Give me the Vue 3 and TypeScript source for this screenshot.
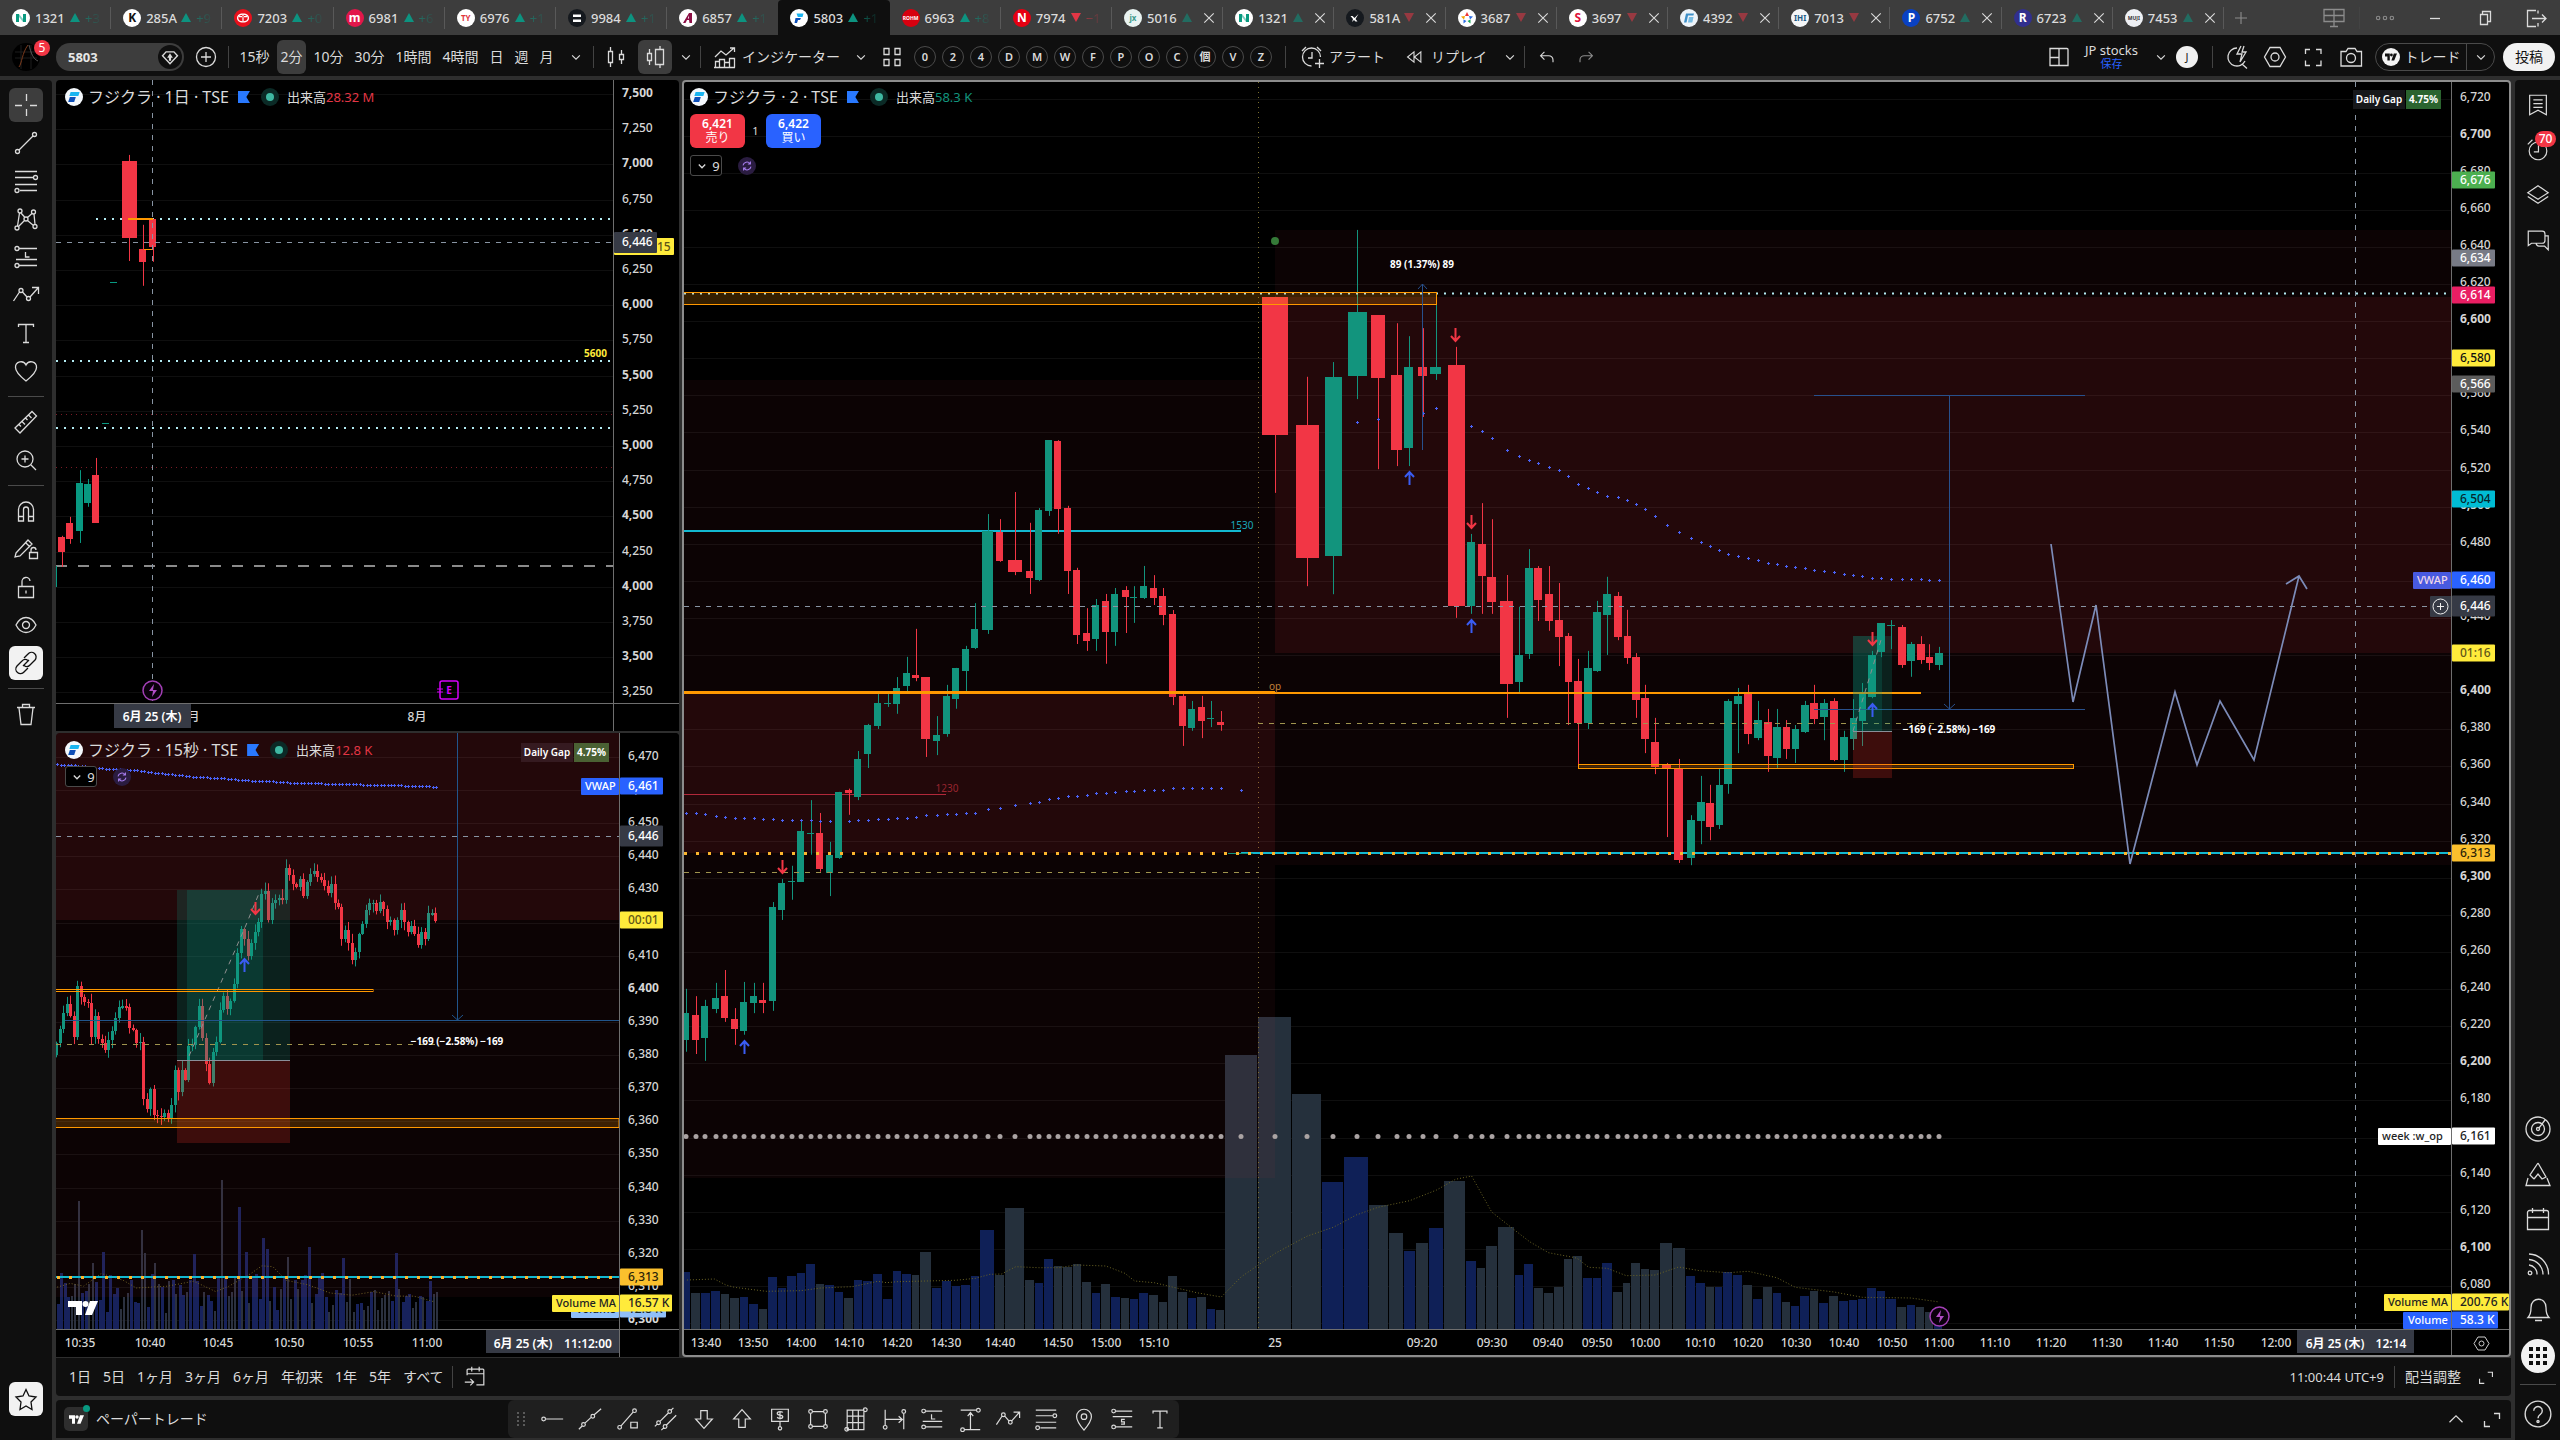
<script setup lang="ts">
import { h } from 'vue'

type Row = number[]
interface Candle { x: number; hi: number; top: number; bot: number; lo: number; w: number; up: boolean }
interface Tag { y: number; text: string; bg: string; fg: string; h?: number; w?: number }

const ring = (x: number, y: number, r: number) =>
  `M${x - r} ${y}a${r} ${r} 0 1 0 ${2 * r} 0a${r} ${r} 0 1 0 ${-2 * r} 0`

/* 28 x 28 stroke icons */
const icons: Record<string, string> = {
  cross: 'M14.5 3v7M14.5 18v7M3 14.5h7M18 14.5h7',
  trend: ring(5.5, 22.5, 2) + ring(22.5, 5.5, 2) + 'M7 21L21 7',
  fib: 'M3 4.5h22M3 10.5h18M3 17.5h22M8 23.5h17' + ring(23.5, 10.5, 2) + ring(5, 23.5, 2),
  pattern: ring(8, 6, 2) + ring(14, 14, 2) + ring(21.5, 7, 2) + ring(5, 23, 2) + ring(23, 21.5, 2) + 'M7.5 8L5.5 21M9 8l4 4.500M15.500 12.500L20 8.500M22 9l1 10.500M6.500 21.500L12.500 15.500M15.500 15.500L21.500 20.500',
  longpos: ring(5, 5.5, 2) + 'M7 5.500h18M4 16.500h21' + ring(5, 22.5, 2) + 'M7 22.500h18M13.500 9v5h4',
  shortpos: ring(5, 5.5, 2) + 'M7 5.500h18M4 11.500h21' + ring(5, 22.5, 2) + 'M7 22.500h18M17 14.500h-3.500v2.500h3v2.500h-3.500',
  forecast: ring(9, 9.5, 2) + ring(16.5, 17.5, 2) + 'M1.500 20L7.500 11M10.500 11l4.500 5M18 16l8-9M20 6.500h6.500v6.500',
  text: 'M6.500 8V5.500h15V8M14 5.500v18M11 23.500h6',
  heart: 'M14 24C9 20 3.500 15.500 3.500 10.500A5.500 5.500 0 0 1 14 8a5.500 5.500 0 0 1 10.500 2.500C24.500 15.500 19 20 14 24z',
  ruler: 'M3 20L20 3.500l4.500 4.500L8 25zM7 16.500l2 2M10 13.500l3 3M13.500 10l2 2M16.500 7l3 3',
  zoomin: ring(13, 13, 8) + 'M19 19l5 5M13 9.500v7M9.500 13h7',
  magnet: 'M6.500 24V12.500a7.500 7.500 0 0 1 15 0V24h-5V12.500a2.500 2.500 0 0 0-5 0V24zM6.500 19.500h5M16.500 19.500h5',
  penlock: 'M4 18L16 5l4 4L8 21l-5 1zM14 8l4 4M17.500 17.500h8v6h-8zM19 17v-2a2.500 2.500 0 0 1 5 0',
  lock: 'M6.500 13.500h15v11h-15zM10 13V9a4 4 0 0 1 8-1M14 17.500v3',
  eye: 'M4 14c5-10 15-10 20 0c-5 10-15 10-20 0z' + ring(14, 14, 3.5),
  link: 'M12 9l4-4a4.500 4.500 0 0 1 7 6l-5 5a4.500 4.500 0 0 1-6 .500M16 19l-4 4a4.500 4.500 0 0 1-7-6l5-5a4.500 4.500 0 0 1 6-.500M11 17l6-6',
  trash: 'M5 7.500h18M10.500 7V4.500h7V7M7 8l2 16.500h10L21 8',
  star: 'M14 4.500l3 6.500 7 1-5 5 1 7.500-6-3.500-6 3.500 1-7.500-5-5 7-1z',
  list: 'M5 3.500h18v21l-9-5-9 5zM9 8.500h10M9 12.500h10M9 16.500h10',
  alarm: ring(14, 15, 9.5) + 'M14.500 9v7h-5M3 8l5-5M20 3l5 5',
  layers: 'M14 4L25 11.500 14 18.500 3 11.500zM3 15.500l11 7.500 11-7.500',
  chat: 'M3.500 20V4.500h15a3 3 0 0 1 3 3v7a3 3 0 0 1-3 3H7zM22 9.500h3v15l-4-4h-6a3 3 0 0 1-3-2.500',
  target: ring(14, 14, 12) + ring(14, 14, 6.5) + ring(14, 14, 1.5) + 'M15 13l6-8',
  tree: 'M14 3l8 14-4 2-4-5-4 5M14 3L6 15l4 4M4 18l-2 7.500h24L23 18',
  calendar: 'M3.500 7.500a2 2 0 0 1 2-2h17a2 2 0 0 1 2 2v17h-21zM3.500 12.500h21M8.500 3v5M19.500 3v5',
  rss: ring(6, 23, 1.8) + 'M5 15a9 9 0 0 1 8 9.500M5 9.500a15 15 0 0 1 14 15M5 4a20 20 0 0 1 19.500 20.500',
  bell: 'M4 22.500h21c-2-2-3-4-3-10 0-11-15-11-15 0 0 6-1 8-3 10zM11 25.500h7',
  help: ring(14, 14, 12) + 'M10 11a4 4 0 1 1 6 3.500c-1.500 1-2 1.500-2 3.500' + ring(14, 21, 1),
  plusring: ring(14, 14, 9.5) + 'M14 9v10M9 14h10',
  bars: 'M8.500 4v4M8.500 20v4M6.500 8.500h4v11h-4zM19.500 7v4M19.500 17v4M17.500 11.500h4v5h-4z',
  hollow: 'M8.500 6v4M8.500 18v4M6.500 10.500h4v7h-4zM19 3v3M19 22v3M14.500 6.500h8v15h-8z',
  indicator: 'M4.500 24.500v-6h4v6M8.500 24.500v-8h5v8M13.500 24.500v-5h5v5M18.500 24.500v-9h5v9M3 24.500h21M4 14l6-6 5 4 8-7M19 5h4.500v4',
  grid4: 'M6 5.500h5v6H6zM17 5.500h5v6h-5zM6 16.500h5v6H6zM17 16.500h5v6h-5z',
  alarmplus: 'M22.500 14a9 9 0 1 0-9 9M14 9v6H10M4 8l4-4M19 4l4 4M21.500 16v9M17 20.500h9',
  rewind: 'M14 8v12l-7.500-6zM22 8v12l-7.500-6z',
  undo: 'M11 8l-4.500 4.500L11 17M7 12.500h9a5 5 0 0 1 5 5V20',
  redo: 'M17 8l4.500 4.500L17 17M21 12.500h-9a5 5 0 0 0-5 5V20',
  layout: 'M5 5.500h17a1 1 0 0 1 1 1v16h-18zM14 5.500v17M5 14.500h9',
  quick: 'M14 5a9 9 0 1 0 8 13M19 21l5 4.500M18 3l-4 8h5l-2 8 6-10h-4l2-6',
  hex: 'M9 4.500h10l5.500 9.500L19 23.500H9L3.500 14z' + ring(14, 14, 4),
  full: 'M6.500 11V6.500H11M17 6.500h5V11M22 17.500v5h-5M11 22.500H6.500V17.500',
  camera: 'M4 8.500h5l2-3h7l2 3h4.500v14.500H4z' + ring(14, 15, 4.5),
  goto: 'M5.500 12V6.500a1 1 0 0 1 1-1h16a1 1 0 0 1 1 1v16h-8M5.500 10.500h18M10.500 3v5M18.500 3v5M3 19.500h9M9 16l3.500 3.500L9 23',
  expand: 'M16 8.500h5.500V14M6.500 16v5.500H12',
  hray: ring(5, 14, 2) + 'M7 14h19',
  eline: ring(7, 20, 2) + ring(17, 11, 2) + 'M8.500 18.500l7-6.500M18.500 9.500L26 3M2 25l3.500-3.500',
  path: ring(5, 23, 2) + ring(21, 5, 2) + 'M6.500 21.500L19.500 6.500M17 17.500h7v6h-7z',
  parallel: ring(6, 18, 2) + ring(18, 6, 2) + ring(13, 22, 2) + 'M7.500 16.500l9-9M14.500 20.500L25 10M2 22l2.500-2.500M9 26l2.500-2.500M19.500 4.500L22 2',
  down: 'M10.500 5h7v9H23l-9 10-9-10h5.500z',
  up: 'M10.500 23h7v-9H23L14 4 5 14h5.500z',
  note: 'M5 3.500h18v13H5zM14 17v5' + ring(14, 24, 1.8) + 'M17 7c-1-1.500-6-1.500-6 1s6 1 6 3.500-5 2.500-6 .500M14 5.500v9',
  rect: ring(6, 6, 2) + ring(22, 6, 2) + ring(6, 22, 2) + ring(22, 22, 2) + 'M8 6h12M8 22h12M6 8v12M22 8v12',
  table: 'M4.500 4.500h18v21h-18zM4.500 11h18M4.500 18h18M10.500 4.500v21M16.500 4.500v21' + ring(24, 4, 2) + ring(4, 25, 2),
  daterange: 'M4.500 4v17M24.500 8v17M5 14.500h18M19 11l4 3.500-4 3.500' + ring(4.5, 23, 2) + ring(24.5, 6, 2),
  pricerange: 'M4 4.500h17M8 25.500h17M14.500 25V8M11.500 11l3-4 3 4' + ring(23, 4.5, 2) + ring(6, 25.5, 2),
  pin: 'M14 26C9 20 6 16 6 11.500a8 8 0 0 1 16 0C22 16 19 20 14 26z' + ring(14, 11.5, 3),
  monitor: 'M4 5.500h20v12H4zM14 5.500V22M10 22.500h8M4 11.500h20',
  dots: ring(6, 14, 2) + ring(14, 14, 2) + ring(22, 14, 2),
  mini: 'M9 14.500h10',
  restore: 'M9.500 10.500h7v10h-7zM11.500 10V7.500h8v10H17',
  exit: 'M15 6.500H6.500v16H15M17 9.500V6.500M17 19v3.500M11 14.500h14M21 10.500l4 4-4 4',
  plus: 'M14 7v14M7 14h14',
  close: 'M8.500 8.500l11 11M19.500 8.500l-11 11',
  chev: 'M9.500 12l4.500 4.500 4.500-4.500',
  chevup: 'M7 17.500l7-7 7 7',
  sync: 'M7 13a7 7 0 0 1 12.500-3M21 15a7 7 0 0 1-12.500 3M20 6v4.500h-4.500M8 22v-4.500h4.500',
  gem: 'M9 7.500h10l4.500 5L14 22.500 4.500 12.500zM14 11l2 3h-1.500v4h-1v-4H12z'
}

const Icon = (p: { name: string; size?: number }) =>
  h('svg', {
    viewBox: '0 0 28 28', width: p.size ?? 28, height: p.size ?? 28, fill: 'none',
    stroke: 'currentColor', 'stroke-width': (p.size ?? 28) < 24 ? 1.8 : 1.3, 'aria-hidden': 'true', style: 'display:block;flex:none'
  }, [h('path', { d: icons[p.name] })])
Icon.props = ['name', 'size']

/* ---------- tabs ---------- */
const tabs = [
  ['1321', 'N', '#fff', '#0a9a80', 'u', '+3'], ['285A', 'K', '#fff', '#111', 'u', '+9'], ['7203', 'T', '#e8101c', '#fff', 'u', '+0'],
  ['6981', 'm', '#e2174a', '#fff', 'u', '+6'], ['6976', 'TY', '#fff', '#e0383e', 'u', '+1'], ['9984', '=', '#15191e', '#fff', 'u', '+1'],
  ['6857', 'A', '#fff', '#8c0f45', 'u', '+1'], ['5803', 'F', '#fff', '#1597e8', 'u', '+1'], ['6963', 'ROHM', '#d7000f', '#fff', 'u', '+8'],
  ['7974', 'N', '#e60012', '#fff', 'd', '−1'], ['5016', 'jx', '#e9f3f1', '#3d9a8c', 'u', ''], ['1321', 'N', '#fff', '#0a9a80', 'u', ''],
  ['581A', 'x', '#15191e', '#fff', 'd', ''], ['3687', '★', '#fff', '#3f7be8', 'd', ''], ['3697', 'S', '#fff', '#e0103a', 'd', ''],
  ['4392', 'F', '#eef4fa', '#3e8fc8', 'd', ''], ['7013', 'IHI', '#f4f6f8', '#1d5a86', 'd', ''], ['6752', 'P', '#0a41c2', '#fff', 'u', ''],
  ['6723', 'R', '#312f8e', '#fff', 'u', ''], ['7453', 'MUJI', '#eef0f4', '#333', 'u', '']
].map(([code, mark, bg, fg, dir, chg], i) => ({ code, mark, bg, fg, dir, chg, active: i === 7, closable: i > 9 }))

/* logos made of plain shapes instead of an initial, on an 18 x 18 disc */
const marks: Record<string, [string, string][]> = {
  '1321': [['M4 5h3v8H4zM11 5h3v8h-3z', '#0a9a80'], ['M7 5l4 5v3L7 8z', '#7fd0c2']],
  '9984': [['M5 5.500h8v2.500H5zM5 10.500h8V13H5z', '#fff']],
  '7203': [['M9 4.500c4 0 6 2 6 4.500s-2 4.500-6 4.500S3 11.500 3 9s2-4.500 6-4.500zm0 1.200C6 5.700 4.300 7 4.300 9S6 12.300 9 12.300s4.700-1.300 4.700-3.300S12 5.700 9 5.700z', '#fff'], ['M5 7h8v1.200H5zM8.400 5.500h1.200v7H8.400z', '#fff']],
  '5803': [['M6.500 4.500h7l-1 3.500H7.800z', '#19b4f0'], ['M5.500 9h5.500l-1 2H8l-1 3H4.500z', '#0d4fb8']],
  '6857': [['M10 4h3v10h-2.500l-.5-3H8l-1.500 3H4zM10 6.500L8.800 9.500H10z', '#8c0f45']],
  '581A': [['M4.500 7h2l2 2 4-4-3 5 2 2.500h-2L8 11l-2 2 1-3z', '#fff']],
  '3687': [['M9 3l2 4H7z', '#e33'], ['M15 7.500l-3 3-1-3.500z', '#2b6be4'], ['M12.500 14.500l-3-2.500 3-1.500z', '#18a558'], ['M5.500 14.500l0-4 3 1.500z', '#2b6be4'], ['M3 7.500l4-.5-1 3.500z', '#f4a100']],
  '4392': [['M6 4.500h8l-.6 2H8l-1.500 7H4z', '#3e8fc8'], ['M9 8h4.500l-1.200 5.500H8z', '#79bde4']]
}

const intervals = [['15秒', 'm'], ['2分', 's'], ['10分', 'm'], ['30分', 'm'], ['1時間', 'l'], ['4時間', 'l'], ['日', 'x'], ['週', 'x'], ['月', 'x']]
const presets = ['0', '2', '4', 'D', 'M', 'W', 'F', 'P', 'O', 'C', '個', 'V', 'Z']
const tools = ['cross', 'trend', 'fib', 'pattern', 'longpos', 'forecast', 'text', 'heart', '-', 'ruler', 'zoomin', '-', 'magnet', 'penlock', 'lock', 'eye', 'link', '-', 'trash']
const sideTop = ['list', 'alarm', 'layers', 'chat']
const sideBottom = ['target', 'tree', 'calendar', 'rss', 'bell']
const ranges = ['1日', '5日', '1ヶ月', '3ヶ月', '6ヶ月', '年初来', '1年', '5年', 'すべて']
const favs = ['hray', 'eline', 'path', 'parallel', 'down', 'up', 'note', 'rect', 'table', 'daterange', 'longpos', 'pricerange', 'forecast', 'fib', 'pin', 'shortpos', 'text']

/* ---------- chart helpers ---------- */
const mapper = (ox: number, oy: number, sx: number, sy: number) => ({
  x: (v: number) => ox + v / sx,
  y: (v: number) => oy + v / sy,
  candle: (r: Row): Candle => ({
    x: Math.round(ox + r[0] / sx), hi: oy + r[1] / sy, top: Math.round(oy + r[2] / sy),
    bot: Math.round(oy + r[3] / sy), lo: oy + r[4] / sy, w: r[5] / sx, up: r[6] === 1
  }),
  line: (pts: Row[]) => pts.map(([a, b]) => `${(ox + a / sx).toFixed(1)},${(oy + b / sy).toFixed(1)}`).join(' ')
})
const fmt = (n: number) => n.toLocaleString('en-US')
const plusMarks = (pts: Row[]) => pts.map(([a, b]) => `M${a - 1} ${b + .5}h3M${a + .5} ${b - 1}v3`).join('')

/* ---------- 2 minute chart ---------- */
const prev = mapper(680, 380, 2.529, 2.178)
const today = mapper(1240, 200, 2.119, 2.24)

const prevRows: Row[] = [
  [15,1326,1379,1437,1463,9,1],[41,1342,1383,1437,1468,9,0],[64,1350,1363,1433,1483,9,1],[90,1313,1346,1370,1379,9,1],[115,1285,1342,1389,1398,9,0],
  [138,1368,1392,1413,1448,9,0],[162,1311,1355,1418,1426,9,1],[186,1313,1342,1357,1379,9,1],[211,1313,1350,1357,1379,9,0],[234,1137,1148,1352,1374,9,1],
  [259,1087,1095,1154,1176,9,1],[282,1058,1091,1093,1132,9,1],[307,960,982,1093,1093,9,1],[332,915,987,989,1034,9,1],[355,943,987,1065,1071,9,0],
  [380,1006,1034,1074,1124,9,1],[403,897,897,1041,1043,9,1],[428,890,893,899,947,9,0],[451,808,825,908,915,9,1],[476,749,751,814,845,9,1],
  [502,684,703,754,760,9,1],[525,684,703,705,712,9,1],[550,647,671,706,727,9,1],[573,603,638,666,680,9,1],[598,542,642,649,656,9,0],
  [623,647,647,782,821,12,0],[651,732,773,786,817,9,1],[674,664,688,771,777,9,1],[699,627,627,695,716,9,1],[724,579,586,634,680,9,1],
  [747,486,542,584,586,9,1],[780,292,329,544,553,14,1],[810,303,331,394,396,9,0],[848,244,392,418,425,18,0],[884,311,416,431,466,9,0],
  [907,279,283,436,438,9,1],[932,131,131,285,296,9,1],[957,131,133,281,335,9,0],[982,274,279,416,466,9,0],[1005,409,414,555,575,9,0],
  [1030,497,551,568,590,9,0],[1053,477,490,564,590,9,1],[1078,466,481,549,618,9,0],[1101,453,466,549,579,9,1],[1127,449,457,473,551,9,0],
  [1149,449,473,475,529,9,1],[1174,405,449,475,477,9,1],[1200,425,453,475,490,9,0],[1222,453,470,512,534,9,0],[1248,501,510,690,708,9,0],
  [1271,684,688,754,797,9,0],[1296,699,716,758,764,9,1],[1319,688,712,743,780,9,0],[1344,699,736,738,756,9,1],[1369,721,745,751,764,9,0],
  [1420,1030,1030,1032,1032,32,1]
]
const todayRows: Row[] = [
  [75,217,217,526,656,28,0],[143,396,504,802,865,24,0],[198,363,396,797,883,18,1],[247,67,251,394,446,20,1],[293,258,258,399,603,15,0],
  [332,276,392,560,596,12,0],[359,305,374,556,596,10,1],[387,287,374,394,486,10,0],[416,208,374,390,403,12,1],[457,329,370,909,936,18,0],
  [490,748,766,909,927,8,1],[512,679,771,842,927,8,0],[535,715,844,900,927,10,0],[565,840,898,1084,1160,14,0],[592,911,1019,1080,1104,8,1],
  [613,782,824,1017,1028,8,1],[632,820,824,896,943,8,0],[654,820,883,943,965,8,0],[675,858,941,979,1044,8,0],[694,970,977,1080,1176,7,0],
  [717,1028,1077,1172,1265,8,0],[738,1010,1048,1172,1185,8,1],[757,898,923,1055,1057,8,1],[778,844,883,930,1019,8,1],[800,878,887,979,986,8,0],
  [819,918,977,1026,1039,7,0],[840,1015,1024,1120,1160,8,0],[859,1086,1116,1207,1239,8,0],[880,1160,1214,1270,1286,8,0],[904,1261,1265,1272,1427,10,0],
  [931,1252,1274,1478,1485,10,0],[955,1378,1389,1474,1490,8,1],[976,1290,1348,1391,1443,8,1],[995,1310,1351,1404,1434,8,0],[1016,1274,1310,1400,1409,7,1],
  [1035,1118,1122,1308,1330,8,1],[1056,1093,1111,1129,1239,8,1],[1077,1086,1102,1196,1219,8,0],[1097,1122,1165,1205,1210,8,1],[1118,1140,1169,1245,1281,8,0],
  [1137,1140,1180,1250,1272,8,1],[1158,1165,1180,1230,1252,7,0],[1177,1176,1185,1230,1261,7,1],[1198,1122,1131,1192,1194,8,1],[1217,1086,1127,1163,1174,8,0],
  [1238,1118,1127,1158,1210,8,1],[1259,1116,1122,1254,1257,8,0],[1279,1189,1203,1254,1281,8,1],[1300,1118,1160,1207,1232,7,1],[1319,1082,1104,1167,1223,7,1],
  [1340,1010,1019,1113,1116,8,1],[1359,948,948,1012,1024,8,1],[1380,941,952,954,1006,8,1],[1402,952,956,1042,1048,8,0],[1421,990,995,1033,1068,8,1],
  [1442,977,995,1030,1039,8,0],[1461,995,1024,1037,1053,7,0],[1482,1001,1015,1042,1053,8,1]
]
const candles = [...prevRows.map(prev.candle), ...todayRows.map(today.candle)]

/* volume: height in px, negative values are down bars */
const volRaw = [
  57,-36,36,38,-35,-31,32,25,-20,52,41,53,56,65,-45,44,37,-31,49,48,55,30,58,55,-54,-77,41,48,43,44,53,99,-54,-121,-49,46,70,-63,-62,-65,-47,36,-45,32,-31,30,36,-34,-27,-53,-37,31,-32,20,-19,
  -274,-312,-235,147,172,-124,-96,78,-86,101,-148,68,-61,-83,-102,54,65,-41,-36,-42,-70,-73,
  51,51,66,-37,-46,-66,-60,-59,-86,-81,53,46,-42,42,57,54,-44,30,-42,36,-27,23,33,-38,26,-33,28,29,30,41,38,30,-22,24,-22,-17,7
]
const volumes = candles.map((c, i) => {
  const split = (a: Candle, b: Candle) => a.x + (b.x - a.x) * a.w / (a.w + b.w)
  const l = i ? split(candles[i - 1], c) : 684
  const r = i < candles.length - 1 ? split(c, candles[i + 1]) : c.x + 4
  const v = volRaw[i] ?? 0
  return { x: Math.round(l), w: Math.max(1, Math.round(r) - Math.round(l) - 1), h: Math.abs(v), up: v > 0 }
})
const volMa = [
  mapper(680, 980, 1.742, 3).line([[12,900],[60,897],[80,915],[95,922],[150,934],[210,932],[245,924],[300,920],[345,904],[360,908],[378,905],[480,901],[515,895],[540,883],[560,882],[585,860],[625,863],[660,863],[690,855],[742,858],[775,880],[792,903],[826,908],[860,922],[900,938],[943,951],[978,890],[1037,820],[1093,768],[1138,742],[1178,705],[1216,682],[1271,662],[1318,630],[1351,598],[1379,588],[1414,696],[1450,745],[1480,785],[1513,818],[1556,832]]),
  mapper(1560, 980, 1.568, 3).line([[27,835],[45,862],[74,865],[104,887],[149,885],[186,861],[219,872],[264,878],[295,874],[340,893],[369,922],[430,936],[474,952],[550,954],[595,966]])
].join(' ')

const vwapPrev = [942,944,946,949,951,953,955,955,957,957,959,959,959,959,961,961,0,961,959,959,957,957,955,953,951,948,948,946,946,944,942,935,933,925,922,920,913,911,907,905,903,900,900,898,896,896,894,894,892,889,889,889,889,889,889,892]
const vwapToday = [0,0,0,498,490,0,0,476,467,0,507,518,534,561,574,583,590,597,604,619,637,646,653,662,666,671,682,693,707,727,744,758,767,776,785,792,798,803,807,812,816,819,821,825,828,830,834,837,841,843,846,846,848,848,850,850,852,852]
const vwap = plusMarks([
  ...vwapPrev.map((v, i) => [candles[i].x, v ? Math.round(prev.y(v)) : 0]),
  ...vwapToday.map((v, i) => [candles[56 + i].x, v ? Math.round(today.y(v)) : 0])
].filter(p => p[1] > 0))

const gridMain = Array.from({ length: 34 }, (_, i) => ({ y: Math.round(98.5 + 37.11 * i), label: i < 33 ? fmt(6720 - 20 * i) : '' }))
const tagsMain: Tag[] = [
  { y: 180, text: '6,676', bg: '#4caf50', fg: '#fff' }, { y: 258, text: '6,634', bg: '#787b86', fg: '#fff' },
  { y: 295, text: '6,614', bg: '#e91e63', fg: '#fff' }, { y: 358, text: '6,580', bg: '#ffeb3b', fg: '#111' },
  { y: 384, text: '6,566', bg: '#5c5c5c', fg: '#fff' }, { y: 499, text: '6,504', bg: '#00bcd4', fg: '#06262b' },
  { y: 580, text: '6,460', bg: '#2962ff', fg: '#fff' }, { y: 606, text: '6,446', bg: '#363a45', fg: '#fff', h: 21 },
  { y: 653, text: '01:16', bg: '#ffeb3b', fg: '#5f5618' }, { y: 853, text: '6,313', bg: '#fbc02d', fg: '#2c2408' },
  { y: 1136, text: '6,161', bg: '#fff', fg: '#222' }, { y: 1302, text: '200.76 K', bg: '#ffeb3b', fg: '#222', w: 57 },
  { y: 1320, text: '58.3 K', bg: '#2962ff', fg: '#fff', w: 46 }
]
const timesMain: [number, string][] = [
  [706,'13:40'],[753,'13:50'],[801,'14:00'],[849,'14:10'],[897,'14:20'],[946,'14:30'],[1000,'14:40'],[1058,'14:50'],[1106,'15:00'],[1154,'15:10'],[1275,'25'],
  [1422,'09:20'],[1492,'09:30'],[1548,'09:40'],[1597,'09:50'],[1645,'10:00'],[1700,'10:10'],[1748,'10:20'],[1796,'10:30'],[1844,'10:40'],[1892,'10:50'],[1939,'11:00'],
  [1995,'11:10'],[2051,'11:20'],[2107,'11:30'],[2163,'11:40'],[2219,'11:50'],[2276,'12:00']
]
const sells = [[782, 874], [1455, 342], [1471, 529], [1872, 646]]
const buys = [[744, 1040], [1409, 471], [1471, 619], [1872, 703]]

/* ---------- daily chart ---------- */
const day = mapper(0, 80, 2.272, 2.376)
const dayCandles = ([
  [292,178,192,375,430,17,0],[326,344,402,432,489,8,0],[347,330,330,397,432,8,0],[260,480,480,482,482,8,1],[240,815,815,817,817,8,1],
  [140,1083,1086,1121,1157,8,0],[160,1038,1052,1090,1102,8,0],[181,927,957,1071,1100,8,1],[201,948,960,1005,1014,8,1],[219,898,938,1052,1052,8,0]
] as Row[]).map(day.candle)
const gridDay = Array.from({ length: 18 }, (_, i) => ({ y: Math.round(94 + 35.2 * i), label: fmt(7500 - 250 * i) }))

/* ---------- 15 second chart ---------- */
const sec = mapper(0, 730, 2.272, 2.208)
const closes = [690,660,625,605,632,677,565,590,600,602,678,632,682,690,707,685,665,635,612,610,612,658,662,690,688,815,837,793,850,852,855,845,860,828,750,800,750,772,697,695,655,610,680,738,780,712,688,618,588,615,598,560,492,440,462,500,470,447,425,362,355,420,383,376,370,376,305,320,340,347,330,367,335,318,312,325,332,345,360,340,383,390,462,442,470,508,490,450,428,398,383,382,400,380,395,425,420,442,420,398,425,447,433,450,475,445,462,405,405,422]
const noise = (i: number) => { const v = Math.sin(i * 127.1) * 43758.5; return v - Math.floor(v) }
const secCandles = closes.map((c, i) => {
  const o = i ? closes[i - 1] : 718
  const t = Math.min(o, c), b = Math.max(o, c, t + 3)
  return sec.candle([128 + i * 7.9, t - 2 - noise(i) * 18, t, b, b + 2 + noise(i + 50) * 16, 3, c <= o ? 1 : 0])
})
const spikes: Record<number, number> = { 6: 283, 10: 146, 13: 171, 24: 218, 25: 168, 28: 146, 39: 165, 47: 329, 52: 270, 54: 171, 59: 201, 60: 176, 66: 158, 72: 181, 82: 157, 97: 167, 107: 106 }
const secVolumes = closes.map((_, i) => ({
  x: Math.round(57 + i * 3.48), h: Math.round((spikes[i] ?? 35 + noise(i + 9) * 90 * (i > 84 ? 0.7 : 1)) / 2.208), up: noise(i + 3) > 0.45
}))
const gridSec = Array.from({ length: 18 }, (_, i) => ({ y: Math.round(757 + 33.12 * i), label: fmt(6470 - 10 * i) }))
const secVwapKnots: Row[] = [[130,76],[165,77],[222,84],[290,88],[322,90],[360,95],[405,99],[450,104],[500,106],[550,111],[610,113],[660,116],[730,118],[800,120],[870,121],[930,123],[990,125]]
const secVwap = plusMarks(closes.map((_, i) => {
  const x = 130 + i * 7.9
  const k = Math.max(0, secVwapKnots.findIndex(p => p[0] > x) - 1)
  const [a, b] = [secVwapKnots[k], secVwapKnots[k + 1]]
  const y = x > 983 ? 125 : a[1] + (b[1] - a[1]) * (x - a[0]) / (b[0] - a[0])
  return [Math.round(sec.x(x)), Math.round(sec.y(y))]
}))
const secMa = sec.line([[130,1230],[160,1222],[190,1228],[230,1200],[280,1215],[310,1232],[380,1228],[440,1217],[490,1240],[520,1228],[570,1200],[595,1183],[620,1185],[650,1215],[700,1225],[750,1243],[800,1248],[850,1240],[900,1250],[940,1250],[985,1262]])
const tagsSec: Tag[] = [
  { y: 786, text: '6,461', bg: '#2962ff', fg: '#fff' }, { y: 836, text: '6,446', bg: '#363a45', fg: '#fff', h: 21 },
  { y: 920, text: '00:01', bg: '#ffeb3b', fg: '#5f5618' }, { y: 1277, text: '6,313', bg: '#fbc02d', fg: '#2c2408' },
  { y: 1309, text: '12.8 K', bg: '#90bff9', fg: '#123', w: 46 }, { y: 1303, text: '16.57 K', bg: '#ffeb3b', fg: '#222', w: 52 }
]
const timesSec: [number, string][] = [[80, '10:35'], [150, '10:40'], [218, '10:45'], [289, '10:50'], [358, '10:55'], [427, '11:00']]
</script>

<template>
  <div class="app">
    <header class="tabbar">
      <nav class="tabs">
        <a v-for="(t, i) in tabs" :key="i" href="#" class="tab" :class="{ active: t.active, near: i === 6 }">
          <svg v-if="marks[t.code]" class="logo" viewBox="0 0 18 18" :style="{ background: t.bg }"><path v-for="[d, f] in marks[t.code]" :key="d" :d="d" :fill="f" fill-rule="evenodd" /></svg>
          <span v-else class="logo" :class="{ tiny: t.mark.length > 1, micro: t.mark.length > 3 }" :style="{ background: t.bg, color: t.fg }">{{ t.mark }}</span>
          <span class="code">{{ t.code }}</span>
          <span class="tri" :class="[t.dir, { dim: t.closable }]"></span>
          <span v-if="!t.closable" class="chg" :class="t.dir">{{ t.chg }}</span>
          <Icon v-else name="close" :size="24" />
        </a>
      </nav>
      <div class="winbtns">
        <button aria-label="新しいタブ" class="w34 faint"><Icon name="plus" :size="24" /></button>
        <span class="grow"></span>
        <button aria-label="モニター" class="w50 faint"><Icon name="monitor" /></button>
        <span class="vsep"></span>
        <button aria-label="メニュー" class="w50 faint"><Icon name="dots" :size="24" /></button>
        <button aria-label="最小化" class="w50"><Icon name="mini" /></button>
        <button aria-label="復元" class="w50"><Icon name="restore" /></button>
        <button aria-label="終了" class="w50"><Icon name="exit" /></button>
      </div>
    </header>

    <div class="toolbar">
      <button class="avatar" aria-label="ユーザー">
        <svg width="28" height="28" viewBox="0 0 28 28"><circle cx="14" cy="14" r="14" fill="#000" /><path d="M3 9h22M3 15h22M9 2v24M19 2v24" stroke="#1c1c1c" /><path d="M7 24c3-4 3-14 9-22" stroke="#7a3a1c" fill="none" /><path d="M17 2c2 8 4 14 9 16" stroke="#555" fill="none" /></svg>
        <span class="badge five">5</span>
      </button>
      <label class="search"><input type="text" value="5803" aria-label="シンボル検索"><span class="gem"><Icon name="gem" :size="22" /></span></label>
      <button class="w44" aria-label="比較"><Icon name="plusring" /></button>
      <span class="vsep"></span>
      <div class="ints">
        <button v-for="[label, size] in intervals" :key="label" :class="['int', size, { on: label === '2分' }]">{{ label }}</button>
      </div>
      <button class="w34" aria-label="時間足"><Icon name="chev" :size="24" /></button>
      <span class="vsep"></span>
      <button class="w44" aria-label="バー"><Icon name="bars" /></button>
      <button class="styleon" aria-label="ローソク足"><Icon name="hollow" /></button>
      <button class="w28" aria-label="チャートタイプ"><Icon name="chev" :size="24" /></button>
      <span class="vsep"></span>
      <button class="lbl ind"><Icon name="indicator" />インジケーター</button>
      <button class="w28" aria-label="お気に入り"><Icon name="chev" :size="24" /></button>
      <button class="w34" aria-label="テンプレート"><Icon name="grid4" /></button>
      <div class="presets"><button v-for="p in presets" :key="p">{{ p }}</button></div>
      <span class="vsep"></span>
      <button class="lbl alert"><Icon name="alarmplus" />アラート</button>
      <button class="lbl replay"><Icon name="rewind" :size="24" />リプレイ</button>
      <button class="w28" aria-label="リプレイ設定"><Icon name="chev" :size="24" /></button>
      <span class="vsep"></span>
      <button class="w44" aria-label="元に戻す"><Icon name="undo" :size="24" /></button>
      <button class="w34 faint" aria-label="やり直す"><Icon name="redo" :size="24" /></button>
      <span class="grow"></span>
      <button class="w34" aria-label="レイアウト"><Icon name="layout" /></button>
      <button class="saved"><span>JP stocks</span><small>保存</small></button>
      <button class="w28" aria-label="レイアウト一覧"><Icon name="chev" :size="24" /></button>
      <button class="user">J</button>
      <span class="vsep"></span>
      <button class="w38" aria-label="クイック検索"><Icon name="quick" /></button>
      <button class="w38" aria-label="設定"><Icon name="hex" /></button>
      <button class="w38" aria-label="全画面"><Icon name="full" /></button>
      <button class="w38" aria-label="スナップショット"><Icon name="camera" /></button>
      <div class="trade">
        <button class="tmain"><span class="tvdot"><svg width="12" height="8" viewBox="0 0 30 17"><path d="M0 0h12v17H6V7H0z M22 0h8l-7 17h-7z" fill="#0f0f0f" /><circle cx="16" cy="3.500" r="3.500" fill="#0f0f0f" /></svg></span>トレード</button>
        <button class="tdrop" aria-label="ブローカー"><Icon name="chev" :size="24" /></button>
      </div>
      <button class="post">投稿</button>
    </div>

    <main class="work">
      <aside class="left">
        <template v-for="(t, i) in tools" :key="i">
          <hr v-if="t === '-'">
          <button v-else :aria-label="t" :class="{ on: t === 'cross', inv: t === 'link' }"><Icon :name="t" /></button>
        </template>
        <span class="grow"></span>
        <button class="inv star" aria-label="お気に入りツール"><Icon name="star" /></button>
      </aside>

      <section class="center">
        <div class="charts">
          <div class="stack">
            <article class="panel">
              <svg class="chart" viewBox="56 80 623 651">
                <g class="grid"><path v-for="g in gridDay" :key="g.y" :d="`M56 ${g.y + .5}H613`" /></g>
                <g class="price"><text v-for="g in gridDay" :key="g.y" x="622" :y="g.y + 3" :class="{ b: g.label.endsWith('00') }">{{ g.label }}</text></g>
                <path d="M96 219H613M56 361H613M56 428H613" class="cdots" />
                <path d="M56 414.500H613M56 467.500H613" stroke="#7a1a26" stroke-dasharray="1 4" />
                <path d="M56 566H613" stroke="#8b8b8b" stroke-width="2" stroke-dasharray="11 11" />
                <path d="M56.500 566v21" stroke="#089981" />
                <g v-for="c in dayCandles" :key="c.x" :fill="c.up ? '#089981' : '#f23645'">
                  <rect :x="c.x" :y="c.hi" width="1" :height="c.lo - c.hi" />
                  <rect :x="Math.round(c.x - c.w)" :y="c.top" :width="Math.round(c.w * 2)" :height="Math.max(1, c.bot - c.top)" />
                </g>
                <path d="M128 219H153" stroke="#ff9800" stroke-width="2" /><path d="M144 249.500h9" stroke="#ff9800" />
                <text x="607" y="357" text-anchor="end" class="mini" fill="#ffeb3b">5600</text>
                <path d="M152.500 80V703M56 242.500H613" class="hair" />
                <circle cx="152.500" cy="690.500" r="9.500" stroke="#a23fb5" stroke-width="1.500" fill="#0a000c" /><path d="M154 684l-5 7h4l-1 6 5-7h-4z" fill="#b04cc4" />
                <rect x="440" y="681" width="18" height="18" rx="2" fill="none" stroke="#d500f9" stroke-width="1.500" /><text x="449" y="694" text-anchor="middle" class="mini" fill="#d500f9">E</text><path d="M437 689h6M437 692h6" stroke="#d500f9" />
                <path d="M56 703.500H679M613.500 80V731" class="axis" />
                <g class="time"><text x="190" y="721">7月</text><text x="417" y="721">8月</text></g>
                <rect x="114" y="704" width="77" height="24" fill="#363a45" /><text x="152" y="721" class="cross-t">6月 25 (木)</text>
                <rect x="614" y="238" width="60" height="17" rx="1" fill="#ffeb3b" /><text x="657" y="251" class="tag" fill="#5f5618">15</text>
                <rect x="614" y="232" width="43" height="21" rx="1" fill="#363a45" /><text x="622" y="246" class="tag" fill="#fff">6,446</text>
              </svg>
              <div class="legend"><span class="sym"></span><h2>フジクラ · 1日 · TSE</h2><i class="flag"></i><i class="live"></i><span class="vol">出来高<b class="dn">28.32 M</b></span></div>
            </article>

            <article class="panel">
              <svg class="chart" viewBox="56 733 623 624">
                <g class="grid"><path v-for="g in gridSec" :key="g.y" :d="`M56 ${g.y + .5}H619`" /></g>
                <g v-for="v in secVolumes" :key="v.x"><rect :x="v.x" :y="1329 - v.h" :width="v.up ? 3 : 2" :height="v.h" :fill="v.up ? '#17225c' : '#2b3140'" /></g>
                <polyline :points="secMa" class="ma" />
                <g v-for="c in secCandles" :key="c.x" :fill="c.up ? '#089981' : '#f23645'">
                  <rect :x="c.x" :y="c.hi" width="1" :height="c.lo - c.hi" />
                  <rect :x="c.x - 1" :y="c.top" width="3" :height="Math.max(1, c.bot - c.top)" />
                </g>
                <rect x="56" y="733" width="563" height="564" class="z1" /><rect x="56" y="733" width="563" height="187" class="z2" />
                <path :d="secVwap" class="vwap" />
                <rect x="177" y="890" width="113" height="170" class="tp" /><rect x="187" y="890" width="76" height="170" class="tp" /><rect x="177" y="1060" width="113" height="83" class="sl" />
                <path d="M177 1060.500h113" stroke="#8a8f99" /><path d="M189 1056L246 925 260 891" stroke="#8f8f8f" stroke-dasharray="5 5" fill="none" />
                <rect x="40" y="989.500" width="333" height="2" fill="none" stroke="#ff9800" />
                <rect x="40" y="1118.500" width="579" height="9" fill="#ff9800" fill-opacity=".2" stroke="#ff9800" />
                <path d="M457.500 733V1020M452 1015l5.500 5 5.500-5M65 1020.500H619" stroke="#21558c" fill="none" />
                <path d="M56 1044.500H435" class="ydash" />
                <text x="457" y="1045" class="mini" text-anchor="middle" fill="#fff">−169 (−2.58%) −169</text>
                <path d="M255.500 902v12M251 909l4.500 5 4.500-5" class="sell" /><path d="M244.500 972v-13M240 964l4.500-5 4.500 5" class="buy" />
                <path d="M56 1277H619" stroke="#12b8d0" stroke-width="2" /><path d="M57 1277.500H619" class="sq" />
                <path d="M56 836.500H619" class="hair" />
                <path d="M68 1301h14v14h-6v-8h-8zM90 1301h8l-6 14h-7z" fill="#fff" /><circle cx="85.500" cy="1304" r="3" fill="#fff" />
                <rect x="619" y="733" width="60" height="624" fill="#000" />
                <g class="price"><text v-for="g in gridSec" :key="g.y" x="628" :y="g.y + 3" :class="{ b: g.label.endsWith('00') }">{{ g.label }}</text></g>
                <rect x="581" y="778" width="38" height="17" rx="1" fill="#2962ff" /><text x="585" y="790" class="tag nm" fill="#fff">VWAP</text>
                <rect x="571" y="1301" width="48" height="17" rx="1" fill="#90bff9" /><text x="576" y="1313" class="tag nm" fill="#123">Volume</text>
                <g v-for="t in tagsSec" :key="t.text"><rect x="620" :y="t.y - (t.h ?? 17) / 2" :width="t.w ?? 43" :height="t.h ?? 17" rx="1" :fill="t.bg" /><text x="628" :y="t.y + 4" class="tag" :fill="t.fg">{{ t.text }}</text></g>
                <rect x="552" y="1295" width="67" height="17" rx="1" fill="#ffeb3b" /><text x="556" y="1307" class="tag nm" fill="#222">Volume MA</text>
                <path d="M56 1329.500H679M619.500 733V1357" class="axis" />
                <g class="time"><text v-for="[x, s] in timesSec" :key="s" :x="x" y="1347">{{ s }}</text></g>
                <rect x="486" y="1330" width="133" height="23" fill="#363a45" /><text x="523" y="1348" class="cross-t">6月 25 (木)</text><text x="588" y="1348" class="cross-t">11:12:00</text>
              </svg>
              <div class="legend"><span class="sym"></span><h2>フジクラ · 15秒 · TSE</h2><i class="flag"></i><i class="live"></i><span class="vol">出来高<b class="dn">12.8 K</b></span></div>
              <div class="more low"><button class="nine"><Icon name="chev" :size="20" />9</button><span class="sync"><Icon name="sync" :size="16" /></span></div>
              <div class="gap sec"><span>Daily Gap</span><b>4.75%</b></div>
            </article>
          </div>

          <article class="panel main">
            <svg class="chart" viewBox="684 82 1825 1273">
              <g class="grid"><path v-for="g in gridMain" :key="g.y" :d="`M684 ${g.y + .5}H2451`" /></g>
              <g v-for="v in volumes" :key="v.x"><rect :x="v.x" :y="1329 - v.h" :width="v.w" :height="v.h" :fill="v.up ? '#0f2057' : '#25303c'" /></g>
              <polyline :points="volMa" class="ma" />
              <path d="M1258.500 82V1329" stroke="#7a7030" stroke-dasharray="1 4" />
              <rect x="684" y="380" width="591" height="798" class="z1" /><rect x="684" y="692" width="591" height="161" class="z2" />
              <rect x="1275" y="230" width="1176" height="635" class="z1" /><rect x="1275" y="297" width="1176" height="356" class="z2" />
              <path d="M1241 853H2451M684 531H1241" stroke="#12b8d0" stroke-width="2" />
              <path d="M684 794.500H946" stroke="#b2283a" />
              <g v-for="c in candles" :key="c.x" :fill="c.up ? '#12947d' : '#f23645'">
                <rect :x="c.x" :y="c.hi" width="1" :height="Math.max(1, c.lo - c.hi)" />
                <rect :x="Math.round(c.x - c.w)" :y="c.top" :width="Math.round(c.w * 2)" :height="Math.max(1, c.bot - c.top)" />
              </g>
              <circle v-for="c in candles" :key="c.x" :cx="c.x" cy="1136.500" r="2.500" fill="#aaa3a3" />
              <path :d="vwap" class="vwap" />
              <path d="M684 293.500H2451" class="cdots" />
              <rect x="680" y="292.500" width="756.500" height="12" fill="#ff9800" fill-opacity=".2" stroke="#ff9800" />
              <path d="M684 692.500H1275" stroke="#ff9800" stroke-width="3" /><path d="M1275 693H1921" stroke="#ff9800" stroke-width="2" />
              <rect x="1578.500" y="764.500" width="495" height="4" fill="#ff9800" fill-opacity=".2" stroke="#ff9800" />
              <path d="M684 853.500H2451" class="sq" />
              <path d="M1258 723.500H1944M684 872.500H1259" class="ydash" />
              <circle cx="1275" cy="241" r="4" fill="#357a38" />
              <path d="M1422.500 450V284M1418 289l4.500-5 4.500 5M1814 395.500h271M1814 709.500h271M1949.500 395V709M1944 704l5.500 5 5.500-5" stroke="#28508c" fill="none" />
              <rect x="1853" y="636" width="39" height="95" class="tp" /><rect x="1853" y="636" width="29" height="95" class="tp" /><rect x="1853" y="731" width="39" height="47" class="sl" />
              <path d="M1853 731.500h39" stroke="#8a8f99" /><path d="M1853 731L1881 640" stroke="#8f8f8f" stroke-dasharray="5 5" />
              <path v-for="[x, y] in sells" :key="`s${x}${y}`" :d="`M${x + .5} ${y - 14}v13M${x - 4} ${y - 6}l4.500 5 4.500-5`" class="sell" />
              <path v-for="[x, y] in buys" :key="`b${x}${y}`" :d="`M${x + .5} ${y + 14}v-13M${x - 4} ${y + 6}l4.500-5 4.500 5`" class="buy" />
              <path d="M2051 544L2073 702 2096 605 2130 864 2175 692 2197 765 2220 701 2254 760 2299 576M2286 584l13-8 8 13" stroke="#7c8bb8" stroke-width="1.700" fill="none" />
              <path d="M684 606.500H2430M2355.500 82V1329" class="hair" />
              <text x="1422" y="268" class="mini" text-anchor="middle" fill="#fff">89 (1.37%) 89</text>
              <text x="1949" y="733" class="mini" text-anchor="middle" fill="#fff">−169 (−2.58%) −169</text>
              <text x="1242" y="529" class="tiny-l" fill="#1ba7ba">1530</text><text x="947" y="792" class="tiny-l" fill="#98252f">1230</text><text x="1275" y="690" class="tiny-l" fill="#c07f38">op</text>
              <circle cx="1939.500" cy="1316.500" r="9.500" stroke="#a23fb5" stroke-width="1.500" fill="#0a000c" /><path d="M1941 1310l-5 7h4l-1 6 5-7h-4z" fill="#b04cc4" />
              <g class="price"><text v-for="g in gridMain" :key="g.y" x="2460" :y="g.y + 2" :class="{ b: g.label.endsWith('00') }">{{ g.label }}</text></g>
              <rect x="2413" y="572" width="38" height="17" rx="1" fill="#485ae0" /><text x="2417" y="584" class="tag nm" fill="#f0d8e8">VWAP</text>
              <rect x="2430" y="596" width="22" height="21" rx="1" fill="#363a45" /><circle cx="2440.500" cy="606.500" r="7.500" fill="none" stroke="#eee" /><path d="M2437 606.500h7M2440.500 603v7" stroke="#eee" />
              <rect x="2378" y="1128" width="73" height="17" rx="1" fill="#fff" /><text x="2382" y="1140" class="tag nm" fill="#222">week :w_op</text>
              <rect x="2384" y="1294" width="67" height="17" rx="1" fill="#ffeb3b" /><text x="2388" y="1306" class="tag nm" fill="#222">Volume MA</text>
              <rect x="2403" y="1312" width="48" height="17" rx="1" fill="#2962ff" /><text x="2408" y="1324" class="tag nm" fill="#fff">Volume</text>
              <g v-for="t in tagsMain" :key="t.text"><rect x="2452" :y="t.y - (t.h ?? 17) / 2" :width="t.w ?? 43" :height="t.h ?? 17" rx="1" :fill="t.bg" /><text x="2460" :y="t.y + 4" class="tag" :fill="t.fg">{{ t.text }}</text></g>
              <path d="M684 1329.500H2509M2451.500 82V1355" class="axis" />
              <g class="time"><text v-for="[x, s] in timesMain" :key="s" :x="x" y="1347">{{ s }}</text></g>
              <rect x="2297" y="1330" width="117" height="23" fill="#363a45" /><text x="2335" y="1348" class="cross-t">6月 25 (木)</text><text x="2391" y="1348" class="cross-t">12:14</text>
              <path d="M2478 1337h7l4 6.500-4 6.500h-7l-4-6.500z" fill="none" stroke="#ccc" /><circle cx="2481.500" cy="1343.500" r="2.500" fill="none" stroke="#ccc" />
            </svg>
            <div class="legend"><span class="sym"></span><h2>フジクラ · 2 · TSE</h2><i class="flag"></i><i class="live"></i><span class="vol">出来高<b class="up">58.3 K</b></span></div>
            <div class="orders">
              <button class="ord red"><b>6,421</b>売り</button><span>1</span><button class="ord blue"><b>6,422</b>買い</button>
            </div>
            <div class="more"><button class="nine"><Icon name="chev" :size="20" />9</button><span class="sync"><Icon name="sync" :size="16" /></span></div>
            <div class="gap"><span>Daily Gap</span><b>4.75%</b></div>
          </article>
        </div>

        <div class="rangebar">
          <div class="ranges"><button v-for="r in ranges" :key="r">{{ r }}</button></div>
          <span class="vsep"></span>
          <button class="w44" aria-label="日付へ移動"><Icon name="goto" :size="26" /></button>
          <span class="grow"></span>
          <button class="clock">11:00:44 UTC+9</button><span class="vsep"></span><button class="adj">配当調整</button>
          <button class="w50" aria-label="最大化"><Icon name="expand" :size="24" /></button>
        </div>

        <footer class="paper">
          <button class="paperbtn"><span class="tvbox"><svg width="15" height="9" viewBox="0 0 30 17"><path d="M0 0h12v17H6V7H0z M22 0h8l-7 17h-7z" fill="#fff" /><circle cx="16" cy="3.500" r="3.500" fill="#fff" /></svg></span>ペーパートレード</button>
          <div class="favs">
            <span class="handle"><i v-for="n in 8" :key="n"></i></span>
            <button v-for="f in favs" :key="f" :aria-label="f"><Icon :name="f" :size="26" /></button>
          </div>
          <span class="grow"></span>
          <button class="w34" aria-label="開く"><Icon name="chevup" :size="26" /></button>
          <button class="w38" aria-label="最大化"><Icon name="expand" /></button>
        </footer>
      </section>

      <aside class="right">
        <button v-for="s in sideTop" :key="s" :aria-label="s"><Icon :name="s" :size="26" /><span v-if="s === 'alarm'" class="badge seventy">70</span></button>
        <span class="grow"></span>
        <button v-for="s in sideBottom" :key="s" :aria-label="s"><Icon :name="s" /></button>
        <button class="apps" aria-label="アプリ"><span><i v-for="n in 9" :key="n"></i></span></button>
        <hr>
        <button class="helpbtn" aria-label="ヘルプ"><Icon name="help" :size="30" /></button>
      </aside>
    </main>
  </div>
</template>

<style>
body { background: #2e2e2e; }
</style>

<style scoped>
.app { min-height: 100vh; display: flex; flex-direction: column; background: #2e2e2e; color: #dbdbdb; font: 14px/20px "Noto Sans", "Noto Sans CJK JP", sans-serif; overflow: hidden; }
.app *, .app *::before, .app *::after { box-sizing: border-box; }
button { background: none; border: 0; padding: 0; margin: 0; color: inherit; font: inherit; display: flex; align-items: center; justify-content: center; flex: none; white-space: nowrap; }
.grow { flex: 1; }
.vsep { width: 1px; height: 22px; background: #434343; flex: none; }
.w28 { width: 28px; } .w34 { width: 34px; } .w38 { width: 38px; } .w44 { width: 44px; } .w50 { width: 50px; }
.faint { color: #8c8c8c; }

.tabbar { display: flex; height: 35px; background: #3d3d3d; }
.tabs { flex: 1; display: grid; grid-template-columns: repeat(20, 1fr); }
.tab { position: relative; display: flex; align-items: center; padding-left: 12px; color: #dbdbdb; text-decoration: none; font-size: 13px; overflow: hidden; }
.tab::after { content: ""; position: absolute; right: 0; top: 7px; height: 22px; width: 1px; background: #595959; }
.tab.active { background: #0f0f0f; border-radius: 4px 4px 0 0; }
.tab.active::after, .tab.near::after { display: none; }
.logo { width: 18px; height: 18px; border-radius: 9px; flex: none; display: flex; align-items: center; justify-content: center; font-size: 12px; font-weight: 700; line-height: 18px; overflow: hidden; }
.logo.tiny { font-size: 8px; } .logo.micro { font-size: 5px; }
.code { margin-left: 5px; width: 34px; font-weight: 500; }
.tri { width: 0; height: 0; border: 5px solid transparent; flex: none; margin-left: 1px; }
.tri.u { border-top: 0; border-bottom: 9px solid #0d9380; }
.tri.d { border-bottom: 0; border-top: 9px solid #e23645; }
.tri.dim { opacity: .55; margin-right: 5px; }
.chg { margin-left: 5px; -webkit-mask-image: linear-gradient(90deg, rgba(0,0,0,.6), rgba(0,0,0,.1)); mask-image: linear-gradient(90deg, rgba(0,0,0,.6), rgba(0,0,0,.1)); }
.chg.u { color: #0d9380; } .chg.d { color: #e23645; }
.winbtns { width: 336px; display: flex; align-items: center; }

.toolbar { height: 41px; background: #0f0f0f; display: flex; align-items: center; padding: 3px 5px 0 12px; }
.avatar { position: relative; width: 28px; height: 28px; }
.badge { position: absolute; background: #f23645; color: #fff; font-size: 12px; line-height: 16px; height: 16px; border-radius: 8px; text-align: center; }
.badge.five { width: 16px; left: 22px; top: -3px; }
.search { margin-left: 16px; width: 128px; height: 28px; border-radius: 14px; background: #3d3d3d; display: flex; align-items: center; padding: 0 2px 0 12px; }
.search input { flex: 1; min-width: 0; background: none; border: 0; outline: 0; padding: 0; color: #e6e6e6; font: 700 13px "Noto Sans", sans-serif; }
.gem { width: 24px; height: 24px; border-radius: 12px; background: #0f0f0f; display: flex; align-items: center; justify-content: center; }
.ints { display: flex; gap: 4px; margin: 0 2px 0 7px; }
.int { height: 34px; border-radius: 6px; }
.int.m { width: 37px; } .int.s { width: 29px; } .int.l { width: 43px; } .int.x { width: 21px; }
.int.on, .styleon { background: #3d3d3d; }
.styleon { width: 34px; height: 34px; border-radius: 6px; }
.lbl { gap: 3px; }
.ind { margin: 0 7px 0 10px; }
.presets { display: flex; gap: 6px; margin: 0 13px 0 5px; }
.presets button { width: 22px; height: 22px; border: 1px solid #4a4a4a; border-radius: 11px; font-size: 11px; font-weight: 600; }
.alert { margin-left: 12px; } .replay { margin: 0 9px 0 17px; gap: 5px; }
.saved { flex-direction: column; width: 71px; font-size: 13px; line-height: 13px; }
.saved small { color: #2962ff; font-size: 11px; line-height: 13px; }
.user { width: 22px; height: 22px; border-radius: 11px; background: #f0f0f0; color: #222; font-size: 11px; margin: 0 14px 0 1px; }
.user + .vsep { margin-right: 5px; }
.trade { display: flex; height: 28px; border: 1px solid #4a4a4a; border-radius: 14px; width: 120px; margin-left: 5px; }
.tmain { width: 91px; gap: 5px; border-right: 1px solid #4a4a4a; }
.tdrop { width: 27px; }
.tvdot { width: 18px; height: 18px; border-radius: 9px; background: #f2f2f2; display: flex; align-items: center; justify-content: center; }
.post { width: 52px; height: 28px; border-radius: 14px; background: #f2f2f2; color: #0f0f0f; margin-left: 8px; }

.work { flex: 1; display: grid; grid-template-columns: 52px minmax(0, 1fr) 45px; column-gap: 4px; padding-top: 4px; }
.left, .right { background: #0f0f0f; display: flex; flex-direction: column; align-items: center; }
.left { gap: 4px; padding: 8px 0 24px; border-radius: 0 4px 0 0; }
.left button { width: 34px; height: 34px; border-radius: 6px; }
.left .on { background: #3d3d3d; }
.left .inv { background: #f2f2f2; color: #0f0f0f; }
hr { width: 36px; height: 1px; border: 0; background: #4a4a4a; margin: 4px 0; flex: none; }
.right { border-radius: 4px 0 0 0; padding: 2px 0 9px; }
.right button { position: relative; width: 45px; height: 45px; }
.badge.seventy { width: 21px; left: 20px; top: 4px; font-weight: 500; }
.right .apps { height: 49px; }
.right .apps span { width: 34px; height: 34px; border-radius: 17px; background: #f2f2f2; display: grid; grid-template-columns: repeat(3, 4px); gap: 3px; align-content: center; justify-content: center; }
.apps i { width: 4px; height: 4px; background: #0f0f0f; }
.right .helpbtn { height: 34px; margin-top: 8px; }

.center { display: flex; flex-direction: column; min-width: 0; }
.charts { display: grid; grid-template-columns: 623fr 1829fr; column-gap: 3px; }
.stack { display: flex; flex-direction: column; gap: 2px; min-width: 0; }
.panel { position: relative; background: #000; border-radius: 4px 4px 0 0; overflow: hidden; min-width: 0; }
.main { border: 2px solid #8c8c8c; border-radius: 4px; }
.chart { display: block; width: 100%; height: auto; }
.grid path { stroke: #fff; stroke-opacity: .06; }
.axis { stroke: #6e6e6e; }
.hair { stroke: #8894a3; stroke-dasharray: 5 6; fill: none; }
.vwap { stroke: #4a62f5; }
.cdots { stroke: #b2ebf2; stroke-width: 2; stroke-dasharray: 2 6; }
.ydash { stroke: #a0944e; stroke-dasharray: 5 6; }
.sq { stroke: #fbb52d; stroke-width: 3; stroke-dasharray: 3 9; }
.ma { fill: none; stroke: #6b6424; stroke-dasharray: 1 2; }
.z1 { fill: rgba(242, 54, 69, .05); } .z2 { fill: rgba(242, 54, 69, .1); }
.tp { fill: rgba(8, 153, 129, .2); } .sl { fill: rgba(235, 50, 40, .22); }
.sell { stroke: #f23645; stroke-width: 2; fill: none; } .buy { stroke: #3a5cf2; stroke-width: 2; fill: none; }
.price text, .time text, .tag, .cross-t { font-size: 12px; font-weight: 500; }
.price text, .time text { fill: #d6d6d6; }
.price .b { font-weight: 700; }
.tag.nm { font-size: 11px; }
.time text, .cross-t { text-anchor: middle; }
.cross-t { fill: #fff; font-weight: 600; }
.mini { font-size: 10px; font-weight: 700; }
.tiny-l { font-size: 10px; text-anchor: middle; }

.legend { position: absolute; left: 9px; top: 7px; height: 20px; display: flex; align-items: center; }
.main .legend { left: 6px; top: 5px; }
.sym { width: 18px; height: 18px; border-radius: 9px; background: #f4f8fc; position: relative; }
.sym::before { content: ""; position: absolute; left: 5px; top: 4px; width: 9px; height: 4px; background: #19b4f0; transform: skewX(-18deg); }
.sym::after { content: ""; position: absolute; left: 4px; top: 9px; width: 6px; height: 5px; background: #0d4fb8; transform: skewX(-18deg); }
.legend h2 { margin: 0 9px 0 5px; font-size: 16px; line-height: 20px; font-weight: 400; white-space: nowrap; }
.flag { width: 12px; height: 12px; background: #2979ff; clip-path: polygon(0 0, 100% 0, 70% 50%, 100% 100%, 0 100%); }
.live { width: 18px; height: 18px; border-radius: 9px; background: #0b2a26; margin: 0 8px 0 11px; display: flex; align-items: center; justify-content: center; }
.live::before { content: ""; width: 8px; height: 8px; border-radius: 4px; background: #3fb8a2; }
.vol { font-size: 13px; white-space: nowrap; } .vol b { font-weight: 400; }
.dn { color: #e23645; } .up { color: #12947d; }
.orders { position: absolute; left: 6px; top: 32px; display: flex; align-items: center; font-size: 11px; }
.orders span { width: 21px; text-align: center; }
.ord { width: 55px; height: 34px; border-radius: 6px; flex-direction: column; font-size: 12px; line-height: 14px; color: #fff; }
.ord b { font-weight: 600; }
.red { background: #f23645; } .blue { background: #2962ff; }
.more { position: absolute; left: 6px; top: 73px; display: flex; align-items: center; gap: 16px; }
.more.low { left: 9px; top: 33px; }
.nine { width: 32px; height: 21px; border: 1px solid #4a4a4a; border-radius: 3px; background: #000; font-size: 13px; }
.sync { width: 18px; height: 18px; border-radius: 9px; background: #2a1c40; color: #a97ff0; display: flex; align-items: center; justify-content: center; }
.gap { position: absolute; right: 68px; top: 8px; display: flex; gap: 1px; font-size: 10px; line-height: 19px; font-weight: 600; color: #fff; text-align: center; }
.gap span { width: 52px; background: #17181b; } .gap b { width: 35px; background: #2b642f; font-weight: 700; }
.gap.sec { right: 70px; top: 10px; } .gap.sec span { background: #351a20; } .gap.sec b { background: #4a6133; }

.rangebar { margin-top: 1px; height: 38px; background: #0f0f0f; display: flex; align-items: center; border-radius: 0 0 4px 4px; padding-left: 13px; }
.ranges { display: flex; gap: 12px; margin-right: 8px; }
.clock { margin-right: 10px; font-size: 13px; } .adj { margin-left: 10px; }
.paper { margin-top: 4px; height: 38px; background: #0f0f0f; display: flex; align-items: center; border-radius: 4px 4px 0 0; }
.paperbtn { width: 452px; justify-content: flex-start; gap: 8px; padding-left: 8px; }
.tvbox { position: relative; width: 24px; height: 24px; border-radius: 5px; background: #2e2e2e; display: flex; align-items: center; justify-content: center; }
.tvbox::after { content: ""; position: absolute; right: -2px; top: -2px; width: 7px; height: 7px; border-radius: 4px; background: #089981; }
.favs { display: flex; background: #1f1f1f; height: 38px; border-radius: 6px; }
.favs button { width: 38px; }
.handle { width: 25px; display: grid; grid-template-columns: 2px 2px; gap: 2px 4px; place-content: center; }
.handle i { width: 2px; height: 2px; background: #5a5a5a; }
</style>
